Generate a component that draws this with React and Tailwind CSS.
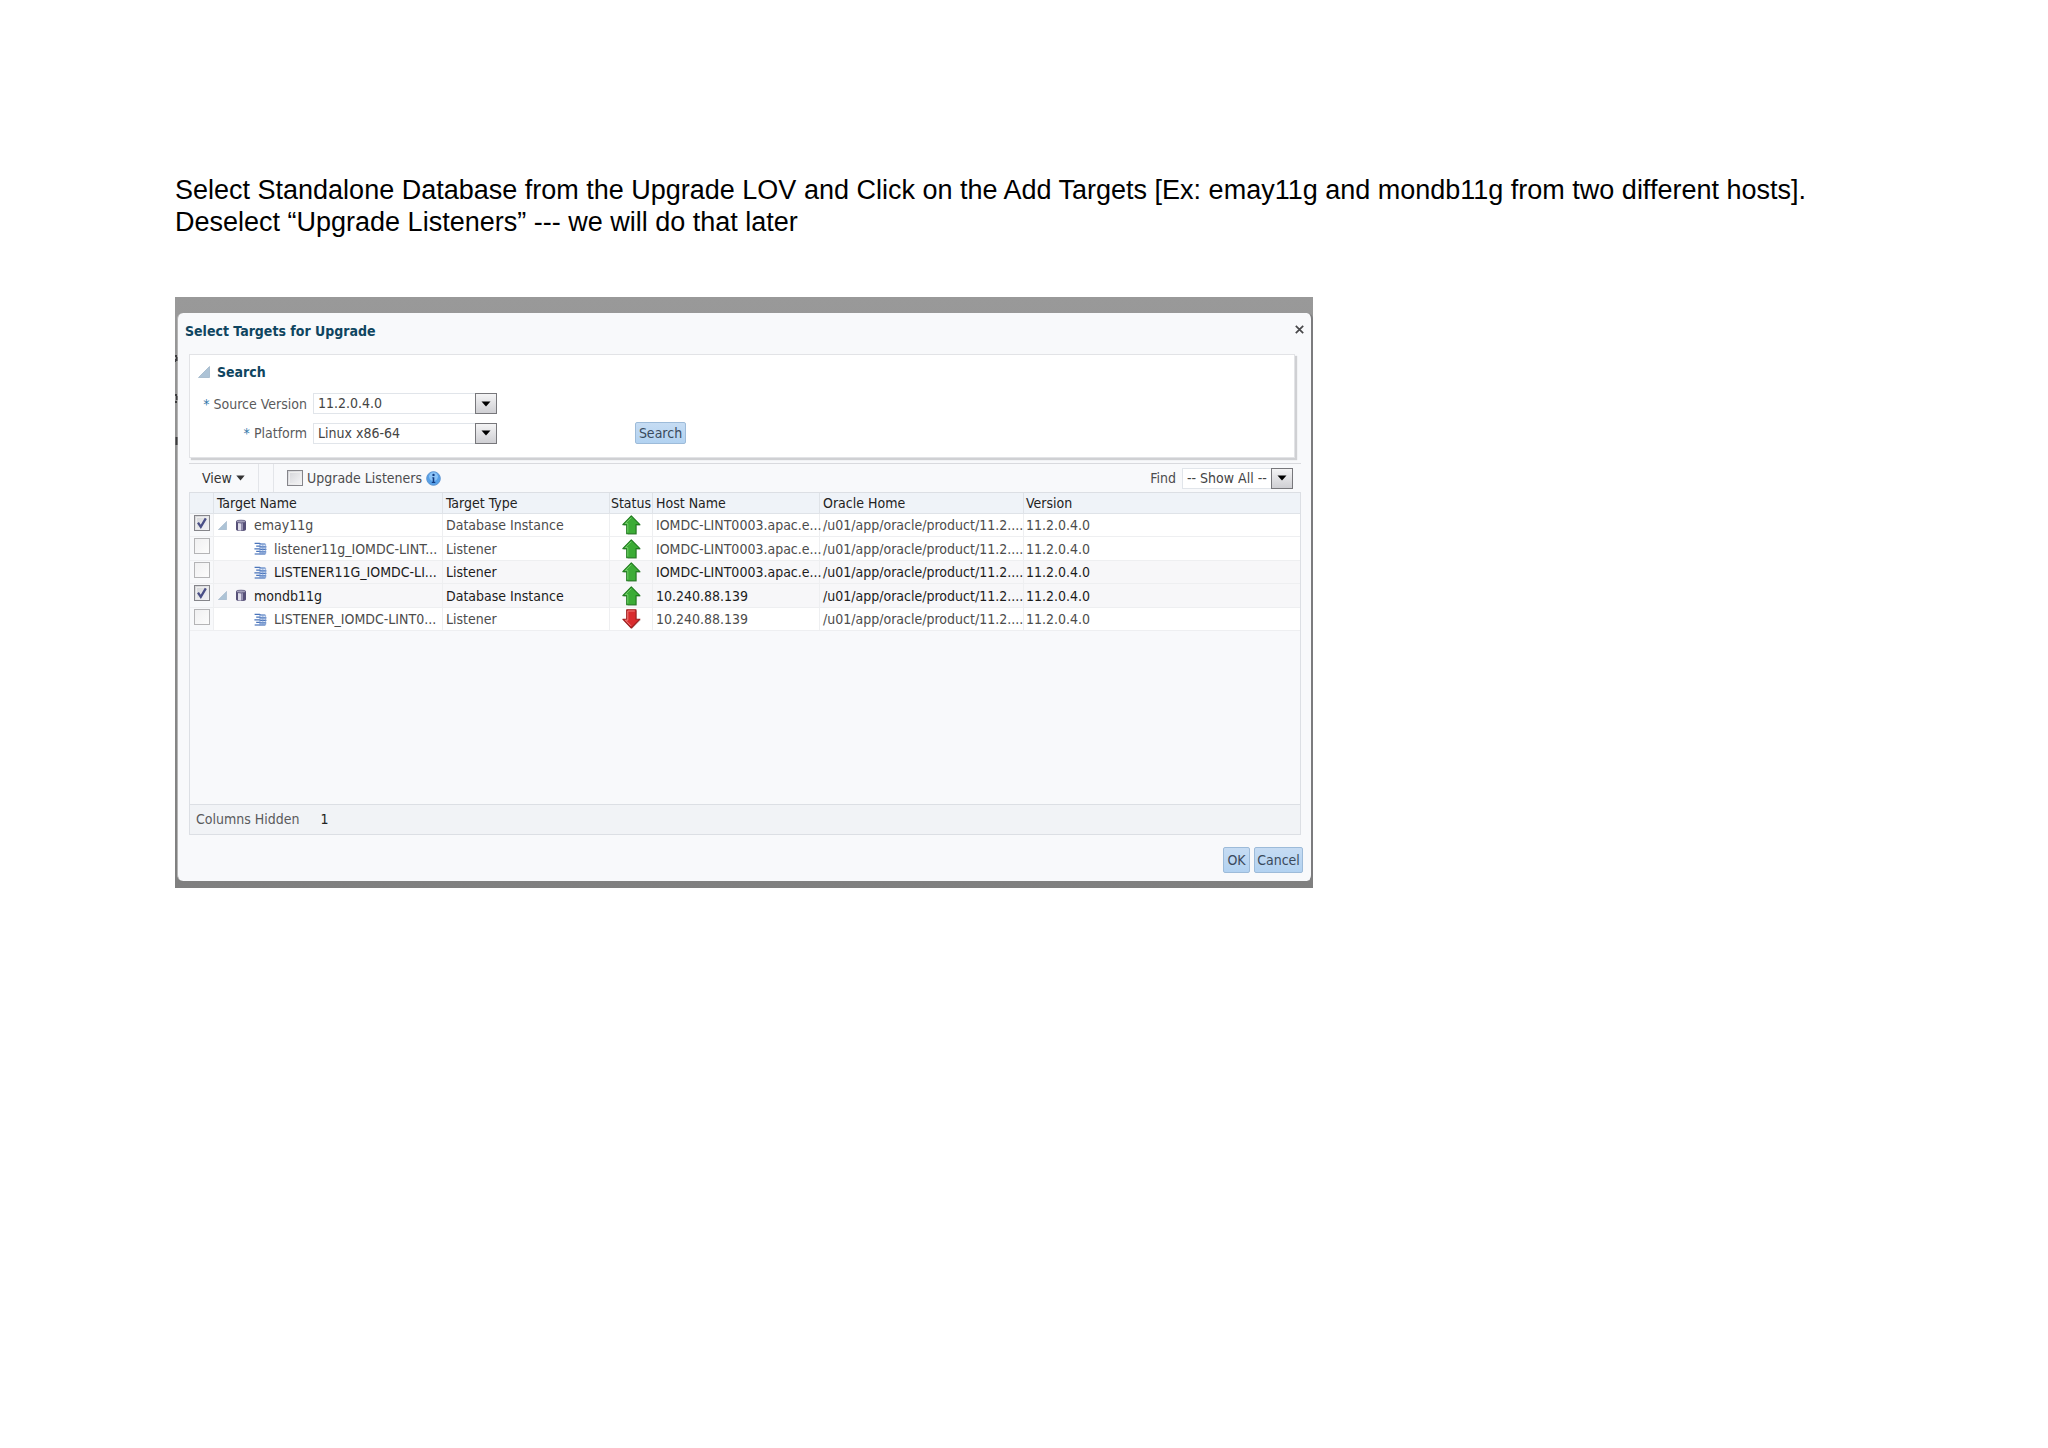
import React from "react";

const TARGETS = [
  { name: "emay11g", type: "Database Instance", up: true, host: "IOMDC-LINT0003.apac.e...", db: true },
  { name: "listener11g_IOMDC-LINT...", type: "Listener", up: true, host: "IOMDC-LINT0003.apac.e..." },
  { name: "LISTENER11G_IOMDC-LI...", type: "Listener", up: true, host: "IOMDC-LINT0003.apac.e...", shaded: true },
  { name: "mondb11g", type: "Database Instance", up: true, host: "10.240.88.139", db: true, shaded: true },
  { name: "LISTENER_IOMDC-LINT0...", type: "Listener", up: false, host: "10.240.88.139" },
];

function Disclosure({ size }) {
  return (
    <svg width={size} height={size} viewBox="0 0 12 12" className="block shrink-0" aria-hidden="true">
      <path d="M11.5 0.5V11.5H0.5Z" fill="#adc3d6" stroke="#9fb6c9" strokeWidth="0.8" />
    </svg>
  );
}

function DatabaseIcon() {
  return (
    <svg width="12" height="13" viewBox="0 0 12 13" className="block shrink-0" aria-hidden="true">
      <path d="M1 2.4C1 0.4 11 0.4 11 2.4V10.6C11 12.6 1 12.6 1 10.6Z" fill="#565078" />
      <path d="M3 4V11.2C4.2 11.7 5.4 11.7 6.2 11.6V4.2Z" fill="#dddbe8" />
      <path d="M6.2 4.2V11.6L8 11.3V4.1Z" fill="#9a95b3" />
      <ellipse cx="6" cy="2.5" rx="4.6" ry="1.4" fill="#a39fb9" stroke="#565078" strokeWidth="0.6" />
    </svg>
  );
}

function ListenerIcon() {
  return (
    <svg width="13" height="13" viewBox="0 0 13 13" className="block shrink-0" aria-hidden="true">
      <path d="M5 1L11 1.6L12 12L5 12.4Z" fill="#dbe6f7" />
      <g stroke="#4a74ba" strokeWidth="1.2" fill="none">
        <path d="M0.6 1.4H5.6L6.6 2H11.4" />
        <path d="M2.2 4.2H5.6L6.6 4.8H12.4" />
        <path d="M0.4 6.8H5.4L6.4 7.4H12.4" />
        <path d="M2.2 9.4H5.4L6.4 9.9H12.2" />
        <path d="M0.6 12H11.4" />
      </g>
      <path d="M6 1.6V12M8.8 2.4V12M11.6 2V12" stroke="#7b9cd3" strokeWidth="0.7" />
    </svg>
  );
}

function StatusArrow({ up }) {
  return (
    <svg
      width="19"
      height="20"
      viewBox="0 0 19 20"
      role="img"
      aria-label={up ? "Up" : "Down"}
      className="mx-auto block"
    >
      {up ? (
        <g>
          <path d="M10 1.4L18.8 10.4H14.8V19.8H5.8V10.4H1.6Z" fill="#b9c4b6" />
          <path d="M9.3 0.8L17.9 9.6H14V18.8H4.7V9.6H0.8Z" fill="#3cac36" stroke="#237d22" strokeWidth="1.1" strokeLinejoin="round" />
          <path d="M9.3 2.6L3.3 8.6H5.8V17.6" fill="none" stroke="#74cd6b" strokeWidth="1" />
        </g>
      ) : (
        <g>
          <path d="M10 19.8L18.8 11H14.8V1.8H5.8V11H1.6Z" fill="#c9bab8" />
          <path d="M9.3 19L17.9 10.2H14V0.8H4.7V10.2H0.8Z" fill="#d92b2d" stroke="#9c1f1f" strokeWidth="1.1" strokeLinejoin="round" />
          <path d="M12.8 2H5.8V11.2H3.4L9 16.8" fill="none" stroke="#ee7f7c" strokeWidth="1" />
        </g>
      )}
    </svg>
  );
}

function InfoIcon() {
  return (
    <svg width="15" height="15" viewBox="0 0 15 15" className="block shrink-0" aria-hidden="true">
      <circle cx="7.5" cy="7.5" r="6.8" fill="#56a0e8" stroke="#5b93d0" strokeWidth="1" />
      <circle cx="7.5" cy="5.6" r="4.4" fill="#8cc4f7" />
      <path d="M6.4 6.2H8.3V11H9.3V12H5.8V11H6.7V7.2H6.2Z" fill="#123a80" />
      <circle cx="7.5" cy="3.9" r="1.2" fill="#123a80" />
    </svg>
  );
}

function Check({ id, label, checked, strong }) {
  return (
    <span className="relative block size-4 shrink-0">
      <input
        id={id}
        type="checkbox"
        aria-label={label}
        defaultChecked={checked}
        className={
          "peer block size-4 appearance-none border bg-linear-to-br " +
          (strong ? "border-[#85858a] from-[#d3d4d8] to-[#f6f6f8] outline-1 -outline-offset-3 outline-[#eeeeee]" : "border-[#b4b4b6] from-[#f0f0f1] to-[#fcfcfc]")
        }
      />
      <svg viewBox="0 0 16 16" className="pointer-events-none absolute inset-0 hidden size-4 peer-checked:block" aria-hidden="true">
        <path d="M4 7.6L6.8 11.8L11.8 3.4" fill="none" stroke="#4a4f86" strokeWidth="2.3" />
      </svg>
    </span>
  );
}

function Dropdown({ id, value, width }) {
  return (
    <span className={"relative block " + width}>
      <select
        id={id}
        className="block h-[21px] w-full appearance-none border border-[#e1e5ea] bg-white pl-1 text-[14px] leading-[19px] text-[#444444]"
      >
        <option>{value}</option>
      </select>
      <span className="pointer-events-none absolute inset-y-0 right-0 flex w-[22px] items-center justify-center border border-[#77777b] bg-linear-to-b from-[#f4f4f5] to-[#cfcfd3]">
        <svg width="10" height="6" viewBox="0 0 10 6" aria-hidden="true">
          <path d="M0.5 0.5H9.5L5 5.5Z" fill="#000000" />
        </svg>
      </span>
    </span>
  );
}

function ActionButton({ children, className }) {
  return (
    <button
      type="button"
      className={
        "rounded-[2px] border border-[#9dbbd9] bg-linear-to-b from-[#c6dcf3] to-[#b2d2f1] text-center text-[14px] leading-5 text-[#3a4a5c] " +
        className
      }
    >
      {children}
    </button>
  );
}

function TargetTable() {
  const head = "border-r border-[#dfe3e8] py-0 pr-0 pl-[3px] text-left font-normal whitespace-nowrap";
  const cell = "border-r border-b border-[#eeeff1] py-0 pr-0 pl-[3px] whitespace-nowrap";
  return (
    <table className="w-full table-fixed border-separate border-spacing-0 text-[14px] leading-5">
      <colgroup>
        <col className="w-[24px]" />
        <col className="w-[229px]" />
        <col className="w-[167px]" />
        <col className="w-[43px]" />
        <col className="w-[167px]" />
        <col className="w-[204px]" />
        <col />
      </colgroup>
      <thead>
        <tr className="h-5 bg-[#eff3f8] text-[#222222] [&>th]:border-b [&>th]:border-b-[#dfe3e8]">
          <td className="border-r border-b border-[#dfe3e8]" />
          <th className={head}>Target Name</th>
          <th className={head}>Target Type</th>
          <th className="border-r border-[#dfe3e8] p-0 text-center font-normal">Status</th>
          <th className={head}>Host Name</th>
          <th className={head}>Oracle Home</th>
          <th className="py-0 pr-0 pl-[2px] text-left font-normal">Version</th>
        </tr>
      </thead>
      <tbody>
        {TARGETS.map((t) => (
          <tr
            key={t.name}
            className={"h-[23px] even:h-6 " + (t.shaded ? "bg-[#f7f7f9] text-[#1c1c1c]" : "bg-white text-[#4c4c4c]")}
          >
            <td className="border-r border-b border-[#eeeff1] bg-[#f8f9fb] pt-px pr-0 pb-0 pl-1 align-top">
              <Check id={"pick-" + t.name} label={"Select " + t.name} checked={t.db} strong={t.db} />
            </td>
            <td className={cell}>
              <span className={"flex items-center " + (t.db ? "" : "pl-[37px]")}>
                {t.db ? (
                  <>
                    <span className="mr-2 ml-px"><Disclosure size={9} /></span>
                    <DatabaseIcon />
                    <span className="ml-[7px]">{t.name}</span>
                  </>
                ) : (
                  <>
                    <ListenerIcon />
                    <span className="ml-[7px]">{t.name}</span>
                  </>
                )}
              </span>
            </td>
            <td className={cell}>{t.type}</td>
            <td className="border-r border-b border-[#eeeff1] p-0"><StatusArrow up={t.up} /></td>
            <td className={cell}>{t.host}</td>
            <td className={cell}>/u01/app/oracle/product/11.2....</td>
            <td className="border-b border-[#eeeff1] py-0 pr-0 pl-[2px]">11.2.0.4.0</td>
          </tr>
        ))}
      </tbody>
    </table>
  );
}

function UpgradeDialog() {
  return (
    <section
      aria-labelledby="dialog-title"
      className="rounded-md border-r-2 border-l border-r-[#7c7c7e] border-l-[#b5b5b5] bg-[#f8f9fb] pb-2"
    >
      <header className="flex h-[41px] items-start justify-between pt-2 pr-1 pl-[7px]">
        <h2 id="dialog-title" className="text-[14px] leading-5 font-bold text-[#0f4560]">Select Targets for Upgrade</h2>
        <button type="button" aria-label="Close" className="flex size-4 items-center justify-center">
          <svg width="9" height="9" viewBox="0 0 9 9" aria-hidden="true">
            <path d="M0.8 0.8L8.2 8.2M8.2 0.8L0.8 8.2" stroke="#48484a" strokeWidth="1.7" />
          </svg>
        </button>
      </header>

      <div className="mr-4 ml-[11px] border border-[#e2e3e6] bg-white pt-[7px] pb-[13px] pl-2 shadow-[2px_2px_1px_#cfd0d3]">
        <div className="flex h-5 items-center gap-[7px]">
          <Disclosure size={12} />
          <h3 className="text-[14px] leading-5 font-bold text-[#0f4560]">Search</h3>
        </div>
        <div className="mt-[11px] flex items-center">
          <label htmlFor="source-version" className="w-[115px] pr-1.5 text-right whitespace-nowrap text-[#5a5a5c]">
            <span className="text-[#2f75a8]">*</span> Source Version
          </label>
          <Dropdown id="source-version" value="11.2.0.4.0" width="w-[184px]" />
        </div>
        <div className="mt-2 flex items-center">
          <label htmlFor="platform" className="w-[115px] pr-1.5 text-right whitespace-nowrap text-[#5a5a5c]">
            <span className="text-[#2f75a8]">*</span> Platform
          </label>
          <Dropdown id="platform" value="Linux x86-64" width="w-[184px]" />
          <ActionButton className="ml-[138px] w-[51px]">Search</ActionButton>
        </div>
      </div>

      <div className="mt-[5px] mr-[10px] ml-[11px] border-t border-[#d9dade]">
        <div className="flex h-7 items-stretch text-[#4c4c4e]">
          <button type="button" className="flex w-[70px] items-center gap-1 border-r border-[#e3e5e9] pl-[13px] text-[#333333]">
            View
            <svg width="9" height="6" viewBox="0 0 9 6" aria-hidden="true">
              <path d="M0.3 0.5H8.7L4.5 5.5Z" fill="#333333" />
            </svg>
          </button>
          <span className="w-[15px] border-r border-[#e3e5e9]" />
          <div className="flex items-center pl-[13px]">
            <Check id="upgrade-listeners" label="Upgrade Listeners" strong />
            <label htmlFor="upgrade-listeners" className="ml-1">Upgrade Listeners</label>
            <button type="button" aria-label="About upgrading listeners" className="ml-1">
              <InfoIcon />
            </button>
          </div>
          <div className="ml-auto flex items-center gap-[6px] pr-2">
            <label htmlFor="find">Find</label>
            <Dropdown id="find" value="-- Show All --" width="w-[111px]" />
          </div>
        </div>
        <div className="border border-[#dcdfe4]">
          <div className="min-h-[311px]">
            <TargetTable />
          </div>
          <footer className="flex h-[30px] items-center gap-[21px] border-t border-[#dcdfe4] bg-[#f1f3f6] pb-px pl-[6px] text-[#5a5a5c]">
            <span>Columns Hidden</span>
            <span className="text-[#222222]">1</span>
          </footer>
        </div>
      </div>

      <div className="mt-3 flex justify-end gap-1 pr-2">
        <ActionButton className="h-[26px] w-[27px]">OK</ActionButton>
        <ActionButton className="h-[26px] w-[49px]">Cancel</ActionButton>
      </div>
    </section>
  );
}

function PageEdge() {
  return (
    <svg width="3" height="150" viewBox="0 0 3 150" className="pointer-events-none absolute top-[57px] left-0" aria-hidden="true">
      <path d="M0 1H2V3H0ZM1 3H2.5V7H1ZM0 5H1V8H0ZM0 40H2V42H0ZM1 42H2.5V46H1ZM0 47H2V49H0ZM0.5 83H2.5V91H0.5Z" fill="#3c3c3e" />
    </svg>
  );
}

export default function App() {
  return (
    <main className="min-h-screen bg-white px-[175px] pt-[174px] pb-16">
      <p className="font-['Liberation_Sans',Arial,sans-serif] text-[27px] leading-8 text-black">
        Select Standalone Database from the Upgrade LOV and Click on the Add Targets [Ex: emay11g and mondb11g from two different hosts].
        <br />
        Deselect “Upgrade Listeners” --- we will do that later
      </p>
      <div className="relative mt-[59px] w-full max-w-[1138px] bg-linear-to-b from-[#999999] to-[#7f7f7f] pt-4 pb-[7px] pl-[2px] font-['DejaVu_Sans_Condensed','DejaVu_Sans',Tahoma,sans-serif] text-[14px] leading-5">
        <UpgradeDialog />
        <PageEdge />
      </div>
    </main>
  );
}
